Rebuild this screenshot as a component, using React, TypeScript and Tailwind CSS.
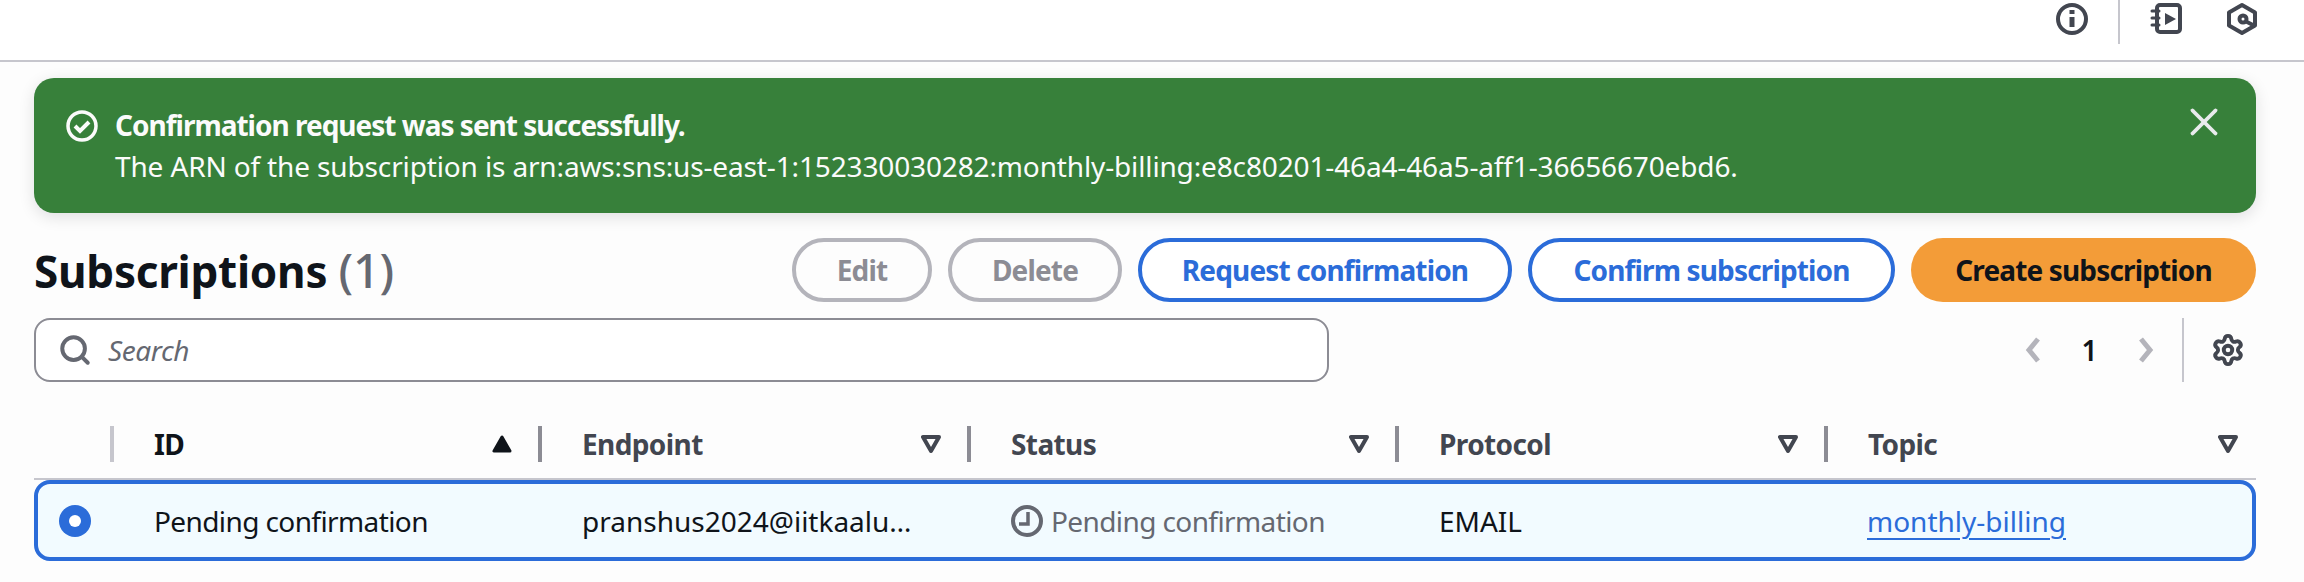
import { Search, Settings, X } from 'lucide-react';

const columns = [
  { name: 'ID', width: 'w-[428px]', sorted: true },
  { name: 'Endpoint', width: 'w-[429px]', sorted: false },
  { name: 'Status', width: 'w-[428px]', sorted: false },
  { name: 'Protocol', width: 'w-[429px]', sorted: false },
  { name: 'Topic', width: 'flex-1', sorted: false },
];

const CaretDown = () => (
  <svg width="20" height="20" viewBox="0 0 20 20" fill="none" stroke="#424650" strokeWidth="4" strokeLinejoin="round">
    <path d="M2 3h16l-8 14z" />
  </svg>
);

const CaretUp = () => (
  <svg width="20" height="20" viewBox="0 0 20 20" fill="#0f141a" stroke="#0f141a" strokeWidth="3" strokeLinejoin="round">
    <path d="M2 17h16L10 3z" />
  </svg>
);

const Chevron = ({ d }: { d: string }) => (
  <svg width="18" height="28" viewBox="0 0 18 28" fill="none" stroke="#b4b4bb" strokeWidth="5">
    <path d={d} />
  </svg>
);

const TopIcons = () => (
  <div className="flex items-start h-[60px]">
    <svg width="34" height="34" viewBox="0 0 34 34" fill="none" stroke="#424650" strokeWidth="4" className="mt-[2px] mr-[29px]">
      <circle cx="17" cy="17" r="14" />
      <path d="M17 15v10" strokeWidth="5" />
      <path d="M17 8v4" strokeWidth="5" />
    </svg>
    <div className="w-[2px] h-[44px] bg-[#c6c6cd]" />
    <svg width="34" height="34" viewBox="0 0 34 34" fill="none" stroke="#424650" strokeWidth="4" className="mt-[2px] ml-[30px]">
      <rect x="7" y="3" width="23" height="27" rx="3" />
      <path d="M2 9h7M2 16h7M2 23h7" strokeWidth="3" strokeLinecap="round" />
      <path d="M15 11l11 6-11 6z" fill="#424650" stroke="none" />
    </svg>
    <svg width="30" height="34" viewBox="0 0 30 34" fill="none" stroke="#424650" strokeWidth="4" strokeLinejoin="round" className="mt-[2px] ml-[43px]">
      <path d="M15 3l13 7.5v13L15 31 2 23.500v-13z" />
      <circle cx="16" cy="17" r="3.5" />
      <path d="M18 19l10 5" />
    </svg>
  </div>
);

const App = () => {
  return (
    <div className="w-[2304px] h-[582px] bg-[#fdfdfd] overflow-hidden font-['Noto_Sans',sans-serif] text-[28px] leading-[40px] text-[#0f141a]">
      <div className="flex justify-end h-[62px] bg-white border-b-2 border-[#c6c6cd] pr-[47px]">
        <TopIcons />
      </div>

      <div className="px-[34px] mr-[14px] pt-[16px]">
        <div className="flex h-[135px] rounded-[20px] bg-[#37803a] text-[#fbfbfb] shadow-[0_4px_16px_rgba(0,7,22,0.12)] pl-[32px] pr-[29px] pt-[27px]">
          <svg width="32" height="32" viewBox="0 0 32 32" fill="none" stroke="currentColor" strokeWidth="3.5" className="mt-[5px] mr-[17px] shrink-0">
            <circle cx="16" cy="16" r="14" />
            <path d="M9 16l5 5 9-9" strokeWidth="4" />
          </svg>
          <div className="flex-1">
            <div className="font-bold tracking-[-1px]">Confirmation request was sent successfully.</div>
            <div className="mt-[1px] tracking-[-0.14px]">The ARN of the subscription is arn:aws:sns:us-east-1:152330030282:monthly-billing:e8c80201-46a4-46a5-aff1-36656670ebd6.</div>
          </div>
          <X size={46} strokeWidth={2} className="mt-[-6px] text-[#e9ebed] shrink-0" />
        </div>

        <div className="flex items-center h-[64px] mt-[25px]">
          <h1 className="flex-1 text-[44px] leading-[64px] font-bold tracking-[-0.25px]">
            Subscriptions <span className="text-[47px] font-medium text-[#656871]">(1)</span>
          </h1>
          <div className="flex gap-[16px] font-bold tracking-[-0.85px]">
            <button className="w-[140px] h-[64px] rounded-full border-4 border-[#b4b4bb] text-[#8c8c94]">Edit</button>
            <button className="w-[174px] h-[64px] rounded-full border-4 border-[#b4b4bb] text-[#8c8c94]">Delete</button>
            <button className="w-[374px] h-[64px] rounded-full border-4 border-[#2b6cd9] bg-white text-[#2b6cd9]">Request confirmation</button>
            <button className="w-[367px] h-[64px] rounded-full border-4 border-[#2b6cd9] bg-white text-[#2b6cd9]">Confirm subscription</button>
            <button className="w-[345px] h-[64px] rounded-full bg-[#f39c38]">Create subscription</button>
          </div>
        </div>

        <div className="flex items-center h-[64px] mt-[16px]">
          <div className="flex items-center w-[1295px] h-[64px] rounded-[16px] border-2 border-[#8c8c94] bg-white pl-[22px]">
            <Search size={34} strokeWidth={2.8} className="text-[#656871] mr-[16px]" />
            <span className="italic text-[#656871] tracking-[-0.4px]">Search</span>
          </div>
          <div className="flex flex-1 items-center justify-end">
            <Chevron d="M14 3L5 14l9 11" />
            <span className="w-[95px] text-center font-semibold">1</span>
            <Chevron d="M4 3l9 11-9 11" />
            <div className="w-[2px] h-[64px] bg-[#c6c6cd] ml-[27px] mr-[27px]" />
            <Settings size={34} strokeWidth={2.75} className="text-[#424650] mr-[11px]" />
          </div>
        </div>

        <div className="flex h-[98px] border-b-2 border-[#c6c6cd] pt-[44px]">
          <div className="w-[76px] shrink-0" />
          {columns.map((c, i) => (
            <div key={c.name} className={`flex ${c.width} h-[36px] items-center`}>
              <div className={`w-[4px] h-[36px] shrink-0 ${i === 0 ? 'bg-[#c6c6cd]' : 'bg-[#8c8c94]'}`} />
              <span className={`flex-1 pl-[40px] font-bold tracking-[-0.6px] ${c.sorted ? 'text-[#0f141a]' : 'text-[#424650]'}`}>{c.name}</span>
              <span className={i === 4 ? 'mr-[18px]' : 'mr-[26px]'}>{c.sorted ? <CaretUp /> : <CaretDown />}</span>
            </div>
          ))}
        </div>

        <div className="flex items-center h-[81px] rounded-[16px] border-4 border-[#2b6cd9] bg-[#f2fbff]">
          <div className="flex w-[72px] shrink-0 justify-end">
            <div className="flex items-center justify-center w-[32px] h-[32px] rounded-full bg-[#2b6cd9] mr-[19px]">
              <div className="w-[12px] h-[12px] rounded-full bg-white" />
            </div>
          </div>
          <div className="w-[428px] pl-[44px] tracking-[-0.6px]">Pending confirmation</div>
          <div className="w-[429px] pl-[44px] truncate">pranshus2024@iitkaalu…</div>
          <div className="flex w-[428px] items-center pl-[44px] text-[#656871] tracking-[-0.6px]">
            <svg width="32" height="32" viewBox="0 0 32 32" fill="none" stroke="currentColor" strokeWidth="4" className="mr-[8px] shrink-0">
              <circle cx="16" cy="16" r="14" />
              <path d="M17 7v12H8" strokeWidth="3.5" />
            </svg>
            Pending confirmation
          </div>
          <div className="w-[429px] pl-[44px]">EMAIL</div>
          <div className="pl-[43px]">
            <a className="text-[#2b6cd9] underline underline-offset-[6px] decoration-2">monthly-billing</a>
          </div>
        </div>
      </div>
    </div>
  );
};

export default App;
